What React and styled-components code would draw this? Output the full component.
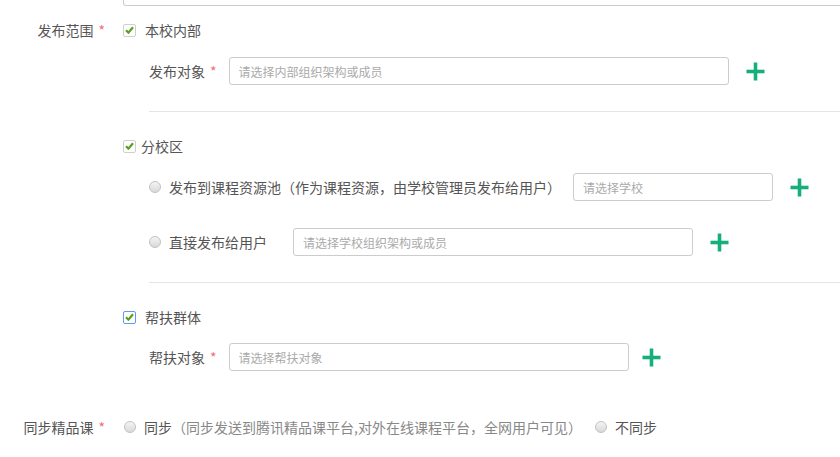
import React from "react";
import styled, { createGlobalStyle } from "styled-components";

const Global = createGlobalStyle`
  html, body { margin: 0; padding: 0; background: #fff; overflow: hidden; }
  body {
    font-family: "Noto Sans CJK SC", "Noto Sans", sans-serif;
    font-size: 14px;
    color: #555;
  }
`;

const Page = styled.div`
  width: 840px;
  height: 457px;
  overflow: hidden;
`;

const TopField = styled.div`
  margin-left: 123px;
  width: 760px;
  height: 5px;
  border: 1px solid #ccc;
  border-top: none;
  border-radius: 0 0 3px 3px;
`;

const FormItem = styled.div`
  display: flex;
  margin-top: ${(p) => p.$top}px;
`;

const Label = styled.div`
  width: 123px;
  box-sizing: border-box;
  padding-right: 18px;
  text-align: right;
  height: 20px;
  line-height: 20px;
  white-space: nowrap;
  flex: none;
`;

const Star = styled.span`
  color: #f46c7a;
  margin-left: 5px;
  font-size: 14px;
`;

const Content = styled.div`
  flex: 1;
  min-width: 0;
`;

const Row = styled.div`
  display: flex;
  align-items: center;
  height: ${(p) => p.$h || 20}px;
  margin-top: ${(p) => p.$top || 0}px;
  margin-left: ${(p) => p.$indent || 0}px;
  gap: ${(p) => p.$gap || 0}px;
  white-space: nowrap;
`;

const SubLabel = styled.div`
  margin-right: 12px;
  line-height: 20px;
`;

const Divider = styled.div`
  margin-left: 26px;
  margin-top: ${(p) => p.$top}px;
  height: 1px;
  background: #e5e5e5;
`;

const Box = styled.span`
  width: 13px;
  height: 13px;
  box-sizing: border-box;
  border: 1px solid ${(p) => (p.$focus ? "#5d9cec" : "#cfcfcf")};
  border-radius: 2px;
  background: #fff;
  display: inline-flex;
  align-items: center;
  justify-content: center;
  flex: none;
`;

const CheckLabel = styled.span`
  line-height: 20px;
`;

const RadioDot = styled.span`
  width: 12px;
  height: 12px;
  box-sizing: border-box;
  border-radius: 50%;
  border: 1px solid #c2c2c2;
  background: linear-gradient(#f4f4f4, #d9d9d9);
  flex: none;
  margin-left: ${(p) => p.$ml || 0}px;
  margin-right: 8px;
`;

const Text = styled.span`
  color: ${(p) => (p.$light ? "#888" : "#555")};
  line-height: 20px;
`;

const Field = styled.input`
  width: ${(p) => p.$w}px;
  height: 28px;
  box-sizing: border-box;
  margin-left: ${(p) => p.$ml || 0}px;
  border: 1px solid #ccc;
  border-radius: 3px;
  padding: 0 9px;
  font-family: "Noto Sans CJK SC", "Noto Sans", sans-serif;
  font-size: 12px;
  color: #555;
  outline: none;
  flex: none;
  &::placeholder { color: #aaa; }
`;

const PlusBtn = styled.span`
  display: inline-flex;
  margin-left: ${(p) => p.$ml || 17}px;
  width: 19px;
  height: 19px;
  flex: none;
`;

const Plus = ({ ml }) => (
  <PlusBtn $ml={ml}>
    <svg width="19" height="19" viewBox="0 0 19 19">
      <rect x="7.7" y="0.5" width="3.6" height="18" fill="#17ae7d" />
      <rect x="0.5" y="7.7" width="18" height="3.6" fill="#17ae7d" />
    </svg>
  </PlusBtn>
);

const Checkbox = ({ focus }) => (
  <Box $focus={focus}>
    <svg width="9" height="8" viewBox="0 0 9 8">
      <path d="M1 4.2 L3.4 6.6 L8 1.2" stroke="#5b9d1d" strokeWidth="2.2" fill="none" />
    </svg>
  </Box>
);

export default function App() {
  return (
    <Page>
      <Global />
      <TopField />

      <FormItem $top={14}>
        <Label>
          发布范围<Star>*</Star>
        </Label>
        <Content>
          <Row $gap={9}>
            <Checkbox />
            <CheckLabel>本校内部</CheckLabel>
          </Row>
          <Row $h={28} $top={17} $indent={26}>
            <SubLabel>
              发布对象<Star>*</Star>
            </SubLabel>
            <Field $w={500} placeholder="请选择内部组织架构或成员" readOnly />
            <Plus />
          </Row>
          <Divider $top={26} />

          <Row $top={24} $gap={5}>
            <Checkbox />
            <CheckLabel>分校区</CheckLabel>
          </Row>
          <Row $h={28} $top={17} $indent={26}>
            <RadioDot />
            <Text>发布到课程资源池（作为课程资源，由学校管理员发布给用户）</Text>
            <Field $w={200} $ml={12} placeholder="请选择学校" readOnly />
            <Plus />
          </Row>
          <Row $h={28} $top={27} $indent={26}>
            <RadioDot />
            <Text>直接发布给用户</Text>
            <Field $w={400} $ml={26} placeholder="请选择学校组织架构或成员" readOnly />
            <Plus />
          </Row>
          <Divider $top={26} />

          <Row $top={24} $gap={9}>
            <Checkbox focus />
            <CheckLabel>帮扶群体</CheckLabel>
          </Row>
          <Row $h={28} $top={16} $indent={26}>
            <SubLabel>
              帮扶对象<Star>*</Star>
            </SubLabel>
            <Field $w={400} placeholder="请选择帮扶对象" readOnly />
            <Plus ml={13} />
          </Row>
        </Content>
      </FormItem>

      <FormItem $top={46}>
        <Label>
          同步精品课<Star>*</Star>
        </Label>
        <Content>
          <Row $indent={1}>
            <RadioDot />
            <Text>同步</Text>
            <Text $light>（同步发送到腾讯精品课平台,对外在线课程平台，全网用户可见）</Text>
            <RadioDot $ml={13} />
            <Text>不同步</Text>
          </Row>
        </Content>
      </FormItem>
    </Page>
  );
}
